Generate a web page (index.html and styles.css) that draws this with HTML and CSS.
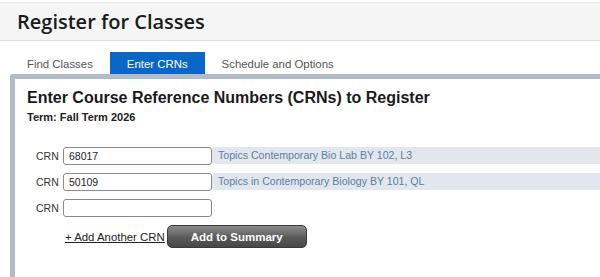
FILE: index.html
```html
<!DOCTYPE html>
<html lang="en">
<head>
  <meta charset="UTF-8">
  <title>Register for Classes</title>
  <link rel="stylesheet" href="styles.css">
</head>
<body>

  <div class="page-header">
    <h1>Register for Classes</h1>
  </div>

  <div class="tabs">
    <a class="tab">Find Classes</a>
    <a class="tab active">Enter CRNs</a>
    <a class="tab">Schedule and Options</a>
  </div>

  <div class="panel">
    <h2>Enter Course Reference Numbers (CRNs) to Register</h2>
    <div class="term">Term: Fall Term 2026</div>

    <div class="crn-list">
      <div class="crn-row">
        <label>CRN</label>
        <input type="text" value="68017">
        <span class="course">Topics Contemporary Bio Lab BY 102, L3</span>
      </div>
      <div class="crn-row">
        <label>CRN</label>
        <input type="text" value="50109">
        <span class="course">Topics in Contemporary Biology BY 101, QL</span>
      </div>
      <div class="crn-row">
        <label>CRN</label>
        <input type="text" value="">
      </div>
    </div>

    <div class="actions">
      <a class="add-link" href="#">+ Add Another CRN</a>
      <button class="btn-summary">Add to Summary</button>
    </div>
  </div>

</body>
</html>
```

FILE: styles.css
```css
body {
  margin: 0;
  font-family: "Liberation Sans", Arial, sans-serif;
  color: #222;
  background: #fff;
}

.page-header {
  margin-top: 2px;
  height: 37px;
  background-color: #f5f5f5;
  border-top: 1px solid #ebebeb;
  border-bottom: 1px solid #e2e2e2;
  padding-left: 17px;
  display: flex;
  align-items: center;
}

.page-header h1 {
  margin: 0;
  font-family: "Open Sans", sans-serif;
  font-weight: 600;
  font-size: 20px;
  color: #1a1a1a;
}

.tabs {
  display: flex;
  margin-top: 11px;
  padding-left: 10px;
}

.tab {
  height: 22px;
  line-height: 24px;
  padding: 0 17px;
  font-size: 11.4px;
  color: #555;
}

.tab.active {
  background-color: #0a67c8;
  color: #fff;
}

.panel {
  margin-left: 10px;
  border-top: 5px solid #b0bcc9;
  border-left: 5px solid #b0bcc9;
  padding: 10px 0 40px 12px;
  border-top-left-radius: 3px;
}

.panel h2 {
  margin: 0;
  font-size: 16px;
  font-weight: bold;
  color: #1a1a1a;
}

.term {
  margin-top: 4px;
  font-size: 11px;
  font-weight: bold;
  color: #222;
}

.crn-list {
  margin-top: 24px;
  display: flex;
  flex-direction: column;
  gap: 9px;
}

.crn-row {
  display: flex;
  align-items: center;
  height: 17px;
}

.crn-row label {
  width: 24px;
  margin-left: 9px;
  margin-right: 3px;
  font-size: 10.5px;
  color: #333;
}

.crn-row input {
  box-sizing: border-box;
  width: 149px;
  height: 18px;
  padding: 0 5px;
  border: 1px solid #8a8a8a;
  border-radius: 3px;
  font-family: "Liberation Sans", Arial, sans-serif;
  font-size: 10.5px;
  color: #222;
}

.course {
  flex: 1;
  height: 17px;
  line-height: 17px;
  padding-left: 6px;
  background-color: #e2e7ed;
  border-radius: 3px 0 0 3px;
  font-size: 10.6px;
  color: #5b7ea3;
}

.actions {
  display: flex;
  align-items: center;
  margin-top: 9px;
  padding-left: 38px;
}

.add-link {
  font-size: 11.4px;
  color: #222;
  text-decoration: underline;
  margin-right: 2px;
}

.btn-summary {
  width: 140px;
  height: 23px;
  border: 1px solid #3a3a3a;
  border-radius: 5px;
  background: linear-gradient(#8c8c8c, #5a5a5a 55%, #474747);
  color: #fff;
  font-family: "Liberation Sans", Arial, sans-serif;
  font-weight: bold;
  font-size: 11.5px;
}
```
